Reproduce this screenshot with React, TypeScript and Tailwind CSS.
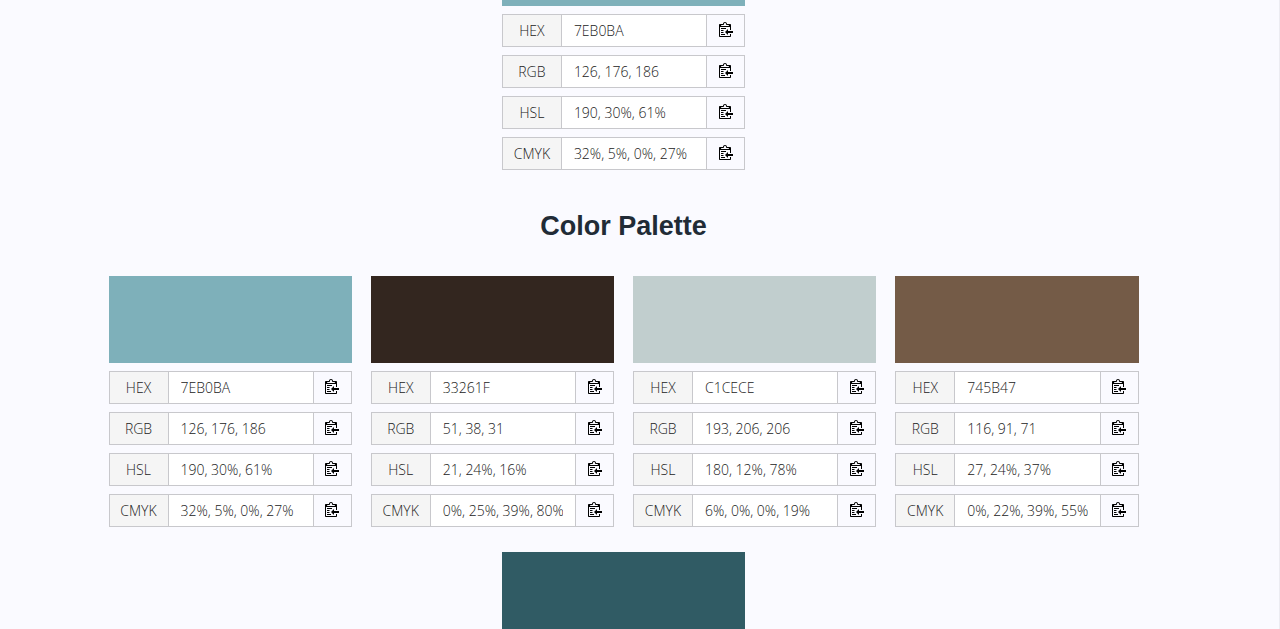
const mainColor = {
  name: 'main',
  bg: '#7eb0ba',
  formats: [
    { label: 'HEX', value: '7EB0BA' },
    { label: 'RGB', value: '126, 176, 186' },
    { label: 'HSL', value: '190, 30%, 61%' },
    { label: 'CMYK', value: '32%, 5%, 0%, 27%' },
  ],
};

const palette = [
  { ...mainColor, name: 'teal' },
  {
    name: 'espresso',
    bg: '#33261f',
    formats: [
      { label: 'HEX', value: '33261F' },
      { label: 'RGB', value: '51, 38, 31' },
      { label: 'HSL', value: '21, 24%, 16%' },
      { label: 'CMYK', value: '0%, 25%, 39%, 80%' },
    ],
  },
  {
    name: 'mist',
    bg: '#c1cece',
    formats: [
      { label: 'HEX', value: 'C1CECE' },
      { label: 'RGB', value: '193, 206, 206' },
      { label: 'HSL', value: '180, 12%, 78%' },
      { label: 'CMYK', value: '6%, 0%, 0%, 19%' },
    ],
  },
  {
    name: 'brown',
    bg: '#745b47',
    formats: [
      { label: 'HEX', value: '745B47' },
      { label: 'RGB', value: '116, 91, 71' },
      { label: 'HSL', value: '27, 24%, 37%' },
      { label: 'CMYK', value: '0%, 22%, 39%, 55%' },
    ],
  },
  { name: 'deep', bg: '#305b64', formats: [] },
];

type Color = typeof mainColor;

function ClippyIcon() {
  return (
    <svg viewBox="0 0 14 16" className="w-[14px] h-4" fill="currentColor" aria-hidden="true">
      <path
        fillRule="evenodd"
        d="M2 13h4v1H2v-1zm5-6H2v1h5V7zm2 3V8l-3 3 3 3v-2h5v-2H9zM4.5 9H2v1h2.5V9zM2 12h2.5v-1H2v1zm9 1h1v2c-.02.28-.11.52-.3.7-.19.18-.42.28-.7.3H1c-.55 0-1-.45-1-1V4c0-.55.45-1 1-1h3c0-1.11.89-2 2-2 1.11 0 2 .89 2 2h3c.55 0 1 .45 1 1v5h-1V6H1v9h10v-2zM2 5h8c0-.55-.45-1-1-1H8c-.55 0-1-.45-1-1s-.45-1-1-1-1 .45-1 1-.45 1-1 1H3c-.55 0-1 .45-1 1z"
      />
    </svg>
  );
}

function ColorCard({ color, swatch = 'h-[87px]' }: { color: Color; swatch?: string }) {
  return (
    <div className="w-full sm:w-[calc((100%-19px)/2)] lg:w-[calc((100%-57px)/4)]">
      <div className={swatch} style={{ backgroundColor: color.bg }} />
      {color.formats.map(({ label, value }) => {
        const id = `${color.name}-${label.toLowerCase()}`;
        return (
          <div
            key={id}
            className="mt-2 flex h-[33px] border border-[#c8c8cc] text-sm font-light text-[#222222]"
          >
            <label
              htmlFor={id}
              className="w-[59px] shrink-0 flex items-center justify-center bg-[#f5f5f5] border-r border-[#c8c8cc]"
            >
              {label}
            </label>
            <input
              id={id}
              readOnly
              defaultValue={value}
              className="flex-1 min-w-0 bg-white px-3 outline-none"
            />
            <button
              type="button"
              aria-label={`Copy ${label}`}
              className="w-[38px] shrink-0 flex items-center justify-center border-l border-[#c8c8cc] pb-1 text-black"
            >
              <ClippyIcon />
            </button>
          </div>
        );
      })}
    </div>
  );
}

export default function App() {
  return (
    <main className="h-screen overflow-hidden bg-[#fafaff] border-r border-[#ececf2] pl-4 pr-12 font-['Open_Sans',sans-serif]">
      <div className="max-w-[1030px] mx-auto">
        <div className="flex justify-center">
          <ColorCard color={mainColor} swatch="h-1.5" />
        </div>

        <h2 className="mt-9 mb-[30px] text-center text-[27px] leading-10 font-bold text-[#212b36] font-['Liberation_Sans',sans-serif]">
          Color Palette
        </h2>

        <div className="flex flex-wrap justify-center gap-x-[19px] gap-y-[25px]">
          {palette.map((color) => (
            <ColorCard key={color.name} color={color} />
          ))}
        </div>
      </div>
    </main>
  );
}
